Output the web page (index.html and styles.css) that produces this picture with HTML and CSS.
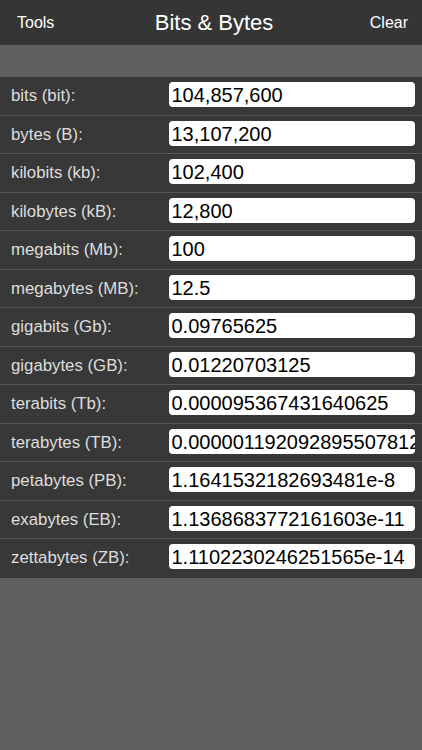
FILE: index.html
```html
<!DOCTYPE html>
<html>
<head>
<meta charset="utf-8">
<link rel="stylesheet" href="styles.css">
</head>
<body>
<div class="app">
  <header class="navbar">
    <span class="nav-btn">Tools</span>
    <span class="nav-title">Bits &amp; Bytes</span>
    <span class="nav-btn">Clear</span>
  </header>
  <div class="band"></div>
  <div class="list">
    <div class="row"><span class="label">bits (bit):</span><div class="field">104,857,600</div></div>
    <div class="row"><span class="label">bytes (B):</span><div class="field">13,107,200</div></div>
    <div class="row"><span class="label">kilobits (kb):</span><div class="field">102,400</div></div>
    <div class="row"><span class="label">kilobytes (kB):</span><div class="field">12,800</div></div>
    <div class="row"><span class="label">megabits (Mb):</span><div class="field">100</div></div>
    <div class="row"><span class="label">megabytes (MB):</span><div class="field">12.5</div></div>
    <div class="row"><span class="label">gigabits (Gb):</span><div class="field">0.09765625</div></div>
    <div class="row"><span class="label">gigabytes (GB):</span><div class="field">0.01220703125</div></div>
    <div class="row"><span class="label">terabits (Tb):</span><div class="field">0.000095367431640625</div></div>
    <div class="row"><span class="label">terabytes (TB):</span><div class="field">0.0000011920928955078125</div></div>
    <div class="row"><span class="label">petabytes (PB):</span><div class="field">1.1641532182693481e-8</div></div>
    <div class="row"><span class="label">exabytes (EB):</span><div class="field">1.1368683772161603e-11</div></div>
    <div class="row last"><span class="label">zettabytes (ZB):</span><div class="field">1.1102230246251565e-14</div></div>
  </div>
</div>
</body>
</html>
```

FILE: styles.css
```css
html, body {
  margin: 0;
  padding: 0;
  background: #5f5f5f;
  font-family: "Liberation Sans", Arial, sans-serif;
}
.app {
  width: 422px;
  min-height: 750px;
  background: #5f5f5f;
}
.navbar {
  height: 45px;
  background: #353535;
  display: flex;
  align-items: center;
  justify-content: space-between;
  padding: 0 14px 0 17px;
  box-sizing: border-box;
  color: #fff;
}
.nav-btn {
  font-size: 16px;
  line-height: 20px;
  padding-top: 1px;
}
.nav-title {
  font-size: 22px;
  line-height: 26px;
  margin-left: 4px;
}
.band {
  height: 32px;
  background: #606060;
}
.list {
  display: flex;
  flex-direction: column;
}
.row {
  height: 38.5px;
  box-sizing: border-box;
  background: #383838;
  border-bottom: 1px solid #565656;
  display: flex;
  align-items: flex-start;
  padding: 5px 7px 0 11px;
}
.row.last {
  border-bottom: none;
}
.label {
  width: 157.5px;
  flex: none;
  color: #dedede;
  font-size: 16.8px;
  line-height: 25px;
  padding-top: 1px;
}
.field {
  flex: 1;
  height: 25px;
  background: #fff;
  border-radius: 4px;
  color: #000;
  font-size: 20px;
  line-height: 27px;
  padding-left: 3px;
  overflow: hidden;
  white-space: nowrap;
  box-sizing: border-box;
}
```
